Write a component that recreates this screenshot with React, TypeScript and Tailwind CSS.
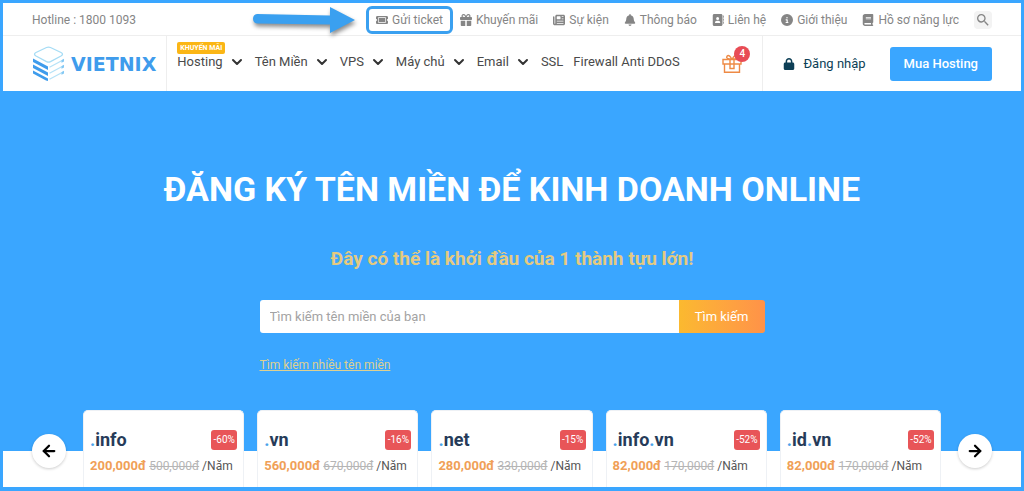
import React, { useState } from 'react';
import type { IconType } from 'react-icons';
import {
  FaTicket,
  FaGift,
  FaNewspaper,
  FaBell,
  FaAddressBook,
  FaCircleInfo,
  FaBook,
  FaLock,
} from 'react-icons/fa6';
import { MdSearch } from 'react-icons/md';
import { ArrowLeft, ArrowRight, ChevronDown } from 'lucide-react';

interface TopLink {
  label: string;
  icon: IconType;
  highlighted?: boolean;
}

interface NavItem {
  label: string;
  hasMenu: boolean;
  tag?: string;
}

interface DomainOffer {
  parts: string[];
  discount: string;
  price: string;
  oldPrice: string;
}

const topLinks: TopLink[] = [
  { label: 'Gửi ticket', icon: FaTicket, highlighted: true },
  { label: 'Khuyến mãi', icon: FaGift },
  { label: 'Sự kiện', icon: FaNewspaper },
  { label: 'Thông báo', icon: FaBell },
  { label: 'Liên hệ', icon: FaAddressBook },
  { label: 'Giới thiệu', icon: FaCircleInfo },
  { label: 'Hồ sơ năng lực', icon: FaBook },
];

const navItems: NavItem[] = [
  { label: 'Hosting', hasMenu: true, tag: 'KHUYẾN MÃI' },
  { label: 'Tên Miền', hasMenu: true },
  { label: 'VPS', hasMenu: true },
  { label: 'Máy chủ', hasMenu: true },
  { label: 'Email', hasMenu: true },
  { label: 'SSL', hasMenu: false },
  { label: 'Firewall Anti DDoS', hasMenu: false },
];

const offers: DomainOffer[] = [
  { parts: ['info'], discount: '-60%', price: '200,000đ', oldPrice: '500,000đ' },
  { parts: ['vn'], discount: '-16%', price: '560,000đ', oldPrice: '670,000đ' },
  { parts: ['net'], discount: '-15%', price: '280,000đ', oldPrice: '330,000đ' },
  { parts: ['info', 'vn'], discount: '-52%', price: '82,000đ', oldPrice: '170,000đ' },
  { parts: ['id', 'vn'], discount: '-52%', price: '82,000đ', oldPrice: '170,000đ' },
];

function PointerArrow() {
  return (
    <svg
      className="absolute top-1/2 right-full mr-3 -translate-y-1/2 drop-shadow-[1px_3px_2px_rgba(0,0,0,0.45)]"
      width="104"
      height="28"
      viewBox="0 0 104 28"
      aria-hidden="true"
    >
      <path d="M5 8 L78 9.5 V1 L103 14 L78 27 V18.5 L5 17.5 Q1 17 1 12.8 Q1 8.500 5 8Z" fill="#3aa0f0" />
    </svg>
  );
}

function Logo() {
  return (
    <a href="#" className="flex items-center gap-[6px]">
      <svg width="33" height="35" viewBox="0 0 33 35" fill="none" aria-hidden="true">
        <path
          d="M14.500 1.500 Q16.500 .7 18.500 1.500 L29 6.500 Q32 8.200 29 10 L18.500 15.600 Q16.500 16.500 14.500 15.600 L4 10 Q1 8.200 4 6.500Z"
          stroke="#a5dcf5"
          strokeWidth="1.300"
        />
        <path d="M1 12.500 L16 20.500 V24 L1 16Z" fill="#3f9cec" />
        <path d="M1 18.500 L16 26.500 V30 L1 22Z" fill="#3f9cec" />
        <path d="M1 24.500 L16 32.500 V35 L14 34.500 L1 27.500Z" fill="#3f9cec" />
        <path d="M17.500 21.300 L32 13.500 M17.500 27.300 L32 19.500 M17.500 33.300 L32 25.500" stroke="#b5e2f7" strokeWidth="1.300" />
        <path d="M29.500 14.200 L32 12.800 V15.500 L29.500 16.800Z M29.500 20.200 L32 18.800 V21.500 L29.500 22.800Z M29.500 26.200 L32 24.800 V27.500 L29.500 28.800Z" fill="#84c8f4" />
      </svg>
      <span className="font-['DejaVu_Sans',sans-serif] text-[19px] leading-6 font-bold text-[#3f9cec]">VIETNIX</span>
    </a>
  );
}

function GiftButton() {
  return (
    <button type="button" aria-label="Quà tặng" className="relative">
      <svg width="20" height="20" viewBox="0 0 20 20" fill="none" stroke="#ee8a45" strokeWidth="1.400" aria-hidden="true">
        <path d="M2.500 10 V18.300 H17.500 V10" />
        <path d="M1 5.500 H19 V10 H1Z" />
        <path d="M8 5.500 V14.500 H12 V5.500" />
        <path d="M9.500 5.200 C5 5 4 4 5 2.200 C6.500 .6 9 2.500 9.500 5.200Z M10.500 5.200 C15 5 16 4 15 2.200 C13.500 .6 11 2.500 10.500 5.200Z" />
      </svg>
      <span className="absolute -top-2 left-3 flex size-4 items-center justify-center rounded-full bg-[#e84c55] text-[10px] font-medium text-white">
        4
      </span>
    </button>
  );
}

function TopBar() {
  return (
    <div className="border-b border-[#eeeeee]">
      <div className="mx-auto flex h-8 max-w-[960px] items-center pt-px text-[12px] text-[#858585]">
        <span>Hotline : 1800 1093</span>
        <nav className="ml-auto flex items-center gap-[15px]">
          {topLinks.map(({ label, icon: Icon, highlighted }) => (
            <a
              key={label}
              href="#"
              className={
                highlighted
                  ? 'relative -mx-[6px] flex h-6 items-center gap-1 rounded-sm px-2 outline-3 -outline-offset-1 outline-[#3aa0f0]'
                  : 'flex items-center gap-1'
              }
            >
              {highlighted && <PointerArrow />}
              <Icon className="h-3 w-auto" />
              {label}
            </a>
          ))}
          <button type="button" aria-label="Tìm kiếm" className="rounded-sm bg-[#f3f3f3] p-px">
            <MdSearch className="size-4" />
          </button>
        </nav>
      </div>
    </div>
  );
}

function Header() {
  return (
    <header className="mx-auto flex h-[55px] max-w-[960px] items-stretch">
      <div className="flex items-center border-r border-[#eeeeee] pr-[10px]">
        <Logo />
      </div>
      <nav className="flex items-center gap-[10px] pl-[10px] text-[13px] leading-4 text-[#4a4a4a]">
        {navItems.map((item) => (
          <a key={item.label} href="#" className="relative flex items-center gap-[6px] pb-1">
            {item.tag && (
              <span className="absolute bottom-full left-0 rounded-xs bg-[#fbb615] px-[3px] text-[7px] leading-[12px] font-bold whitespace-nowrap text-white">
                {item.tag}
              </span>
            )}
            {item.label}
            {item.hasMenu && <ChevronDown className="size-4 text-[#333333]" strokeWidth={3} />}
          </a>
        ))}
      </nav>
      <div className="ml-auto flex items-center border-r border-[#eeeeee] pr-5">
        <GiftButton />
      </div>
      <div className="flex items-center gap-6 pl-5 text-[13px]">
        <a href="#" className="flex items-center gap-2 text-[#0d3f56]">
          <FaLock className="size-3" />
          Đăng nhập
        </a>
        <a href="#" className="rounded-[3px] bg-[#3aa6ff] px-[14px] py-2 leading-[18px] font-medium text-white">
          Mua Hosting
        </a>
      </div>
    </header>
  );
}

function SearchForm() {
  const [domain, setDomain] = useState('');

  return (
    <form
      className="mx-auto mt-[27px] max-w-[505px] text-[13px]"
      onSubmit={(e) => e.preventDefault()}
    >
      <div className="flex h-[33px] overflow-hidden rounded-[3px]">
        <input
          type="text"
          aria-label="Tên miền"
          value={domain}
          onChange={(e) => setDomain(e.target.value)}
          placeholder="Tìm kiếm tên miền của bạn"
          className="min-w-0 flex-1 bg-white px-[10px] text-gray-700 placeholder:text-[#a3a3a3]"
        />
        <button
          type="submit"
          className="w-[86px] bg-linear-to-r from-[#fbb92f] to-[#ff9248] text-white"
        >
          Tìm kiếm
        </button>
      </div>
      <a href="#" className="mt-6 inline-block text-[12px] leading-4 text-[#dfd08f] underline">
        Tìm kiếm nhiều tên miền
      </a>
    </form>
  );
}

function DomainCard({ parts, discount, price, oldPrice }: DomainOffer) {
  return (
    <article className="min-w-0 flex-1 rounded-t-[5px] border border-b-0 border-[#eef1f5] bg-white px-[6px] pt-[19px] pb-[11px]">
      <div className="flex items-center justify-between">
        <h3 className="text-[18px] leading-5 font-bold text-[#263b59]">
          {parts.map((part) => (
            <React.Fragment key={part}>
              <span className="text-[#4aa3ea]">.</span>
              {part}
            </React.Fragment>
          ))}
        </h3>
        <span className="w-[26px] rounded-[3px] bg-[#e85558] text-center text-[10px] leading-5 text-white">{discount}</span>
      </div>
      <p className="mt-[6px] flex items-baseline gap-[3px] text-[12px] leading-5 whitespace-nowrap text-[#555555]">
        <span className="text-[13px] font-bold text-[#f0a057]">{price}</span>
        <span>
          <del className="text-[#b5b5b5]">{oldPrice}</del> /Năm
        </span>
      </p>
    </article>
  );
}

function OfferSlider() {
  const arrowClass =
    'mt-6 flex size-[34px] shrink-0 items-center justify-center rounded-full bg-white text-black shadow-[0_1px_3px_rgba(0,0,0,0.2)]';

  return (
    <section className="bg-[linear-gradient(to_bottom,#3aa6ff_41px,#ffffff_41px)]">
      <div className="mx-auto flex max-w-[960px] items-start gap-[17px]">
        <button type="button" aria-label="Trước" className={arrowClass}>
          <ArrowLeft className="size-[18px]" strokeWidth={3} />
        </button>
        <div className="flex min-w-0 flex-1 gap-[13px]">
          {offers.map((offer) => (
            <DomainCard key={offer.parts.join('.')} {...offer} />
          ))}
        </div>
        <button type="button" aria-label="Sau" className={arrowClass}>
          <ArrowRight className="size-[18px]" strokeWidth={3} />
        </button>
      </div>
    </section>
  );
}

export default function App() {
  return (
    <div className="border-[3px] border-b-4 border-[#3aa6ff] bg-white font-[Roboto,sans-serif]">
      <TopBar />
      <Header />
      <main>
        <section className="bg-[#3aa6ff] pt-[78px] pb-[35px] text-center">
          <h1 className="text-[34px] leading-10 font-bold text-white">ĐĂNG KÝ TÊN MIỀN ĐỂ KINH DOANH ONLINE</h1>
          <p className="mt-9 text-[19px] leading-7 font-bold text-[#e5ca80]">Đây có thể là khởi đầu của 1 thành tựu lớn!</p>
          <div className="text-left">
            <SearchForm />
          </div>
        </section>
        <OfferSlider />
      </main>
    </div>
  );
}
